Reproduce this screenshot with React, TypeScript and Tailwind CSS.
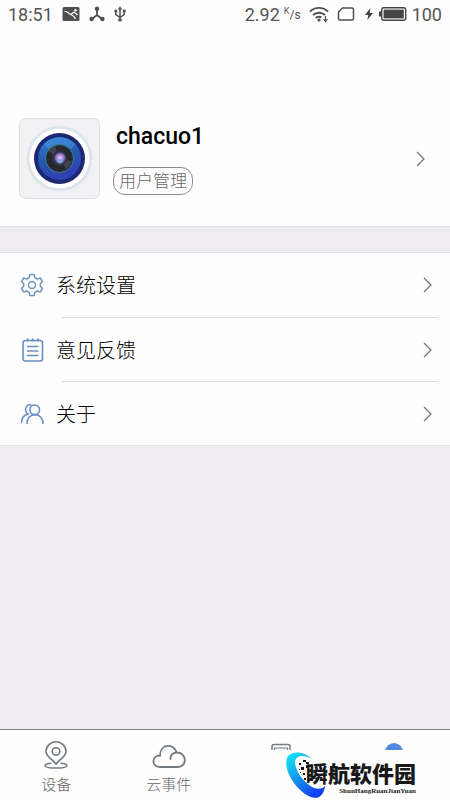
import type { ReactNode } from "react";

type MenuItem = {
    label: string;
    icon: ReactNode;
};

const menuItems: MenuItem[] = [
    { label: "系统设置", icon: <GearIcon /> },
    { label: "意见反馈", icon: <NotepadIcon /> },
    { label: "关于", icon: <PeopleIcon /> },
];

export default function App() {
    return (
        <div className="relative flex min-h-screen flex-col bg-[#eeecf0] font-['Roboto','Noto_Sans_CJK_SC',sans-serif] text-black">
            <header className="border-b border-[#e2e0e4] bg-[#fefefe]">
                <StatusBar />
                <Profile />
            </header>
            <main className="mt-[25px] flex-1">
                <ul className="border-y border-[#e2e0e4] bg-[#fefefe]">
                    {menuItems.map((item, index) => (
                        <MenuRow key={item.label} item={item} divided={index > 0} />
                    ))}
                </ul>
            </main>
            <TabBar />
            <Watermark />
        </div>
    );
}

function StatusBar() {
    return (
        <div className="flex h-7 items-center justify-between px-2 text-[18px] text-[#555]">
            <div className="flex items-center gap-[9px]">
                <span>18:51</span>
                <svg className="h-4 w-[18px]" viewBox="0 0 18 16" aria-hidden="true">
                    <rect x="0.5" y="1" width="17" height="14" rx="1.5" fill="#505050" />
                    <path d="M2.500 5.500C5 5 6.500 7.500 9 8.500 11 9.300 12.500 10 13.500 13" fill="none" stroke="#fefefe" strokeWidth="1.300" />
                    <path d="M9 8.500 12 6l3.500 3" fill="none" stroke="#fefefe" strokeWidth="1.200" />
                    <circle cx="13.500" cy="4.300" r="1.200" fill="#fefefe" />
                </svg>
                <svg className="h-4 w-4" viewBox="0 0 16 16" aria-hidden="true">
                    <path d="M8 3v6M8 9l-5 4M8 9l5 4" fill="none" stroke="#505050" strokeWidth="1.8" />
                    <circle cx="8" cy="2.800" r="2.200" fill="#505050" />
                    <circle cx="2.600" cy="13" r="2.200" fill="#505050" />
                    <circle cx="13.400" cy="13" r="2.200" fill="#505050" />
                </svg>
                <svg className="h-4 w-3" viewBox="0 0 12 16" fill="none" stroke="#505050" strokeWidth="1.500" aria-hidden="true">
                    <path d="M6 2v11M1.800 5.500v3L6 11.500M10.200 5v3.500L6 11.500" />
                    <path d="M3.800 3.500 6 .200l2.200 3.300z" fill="#505050" stroke="none" />
                    <circle cx="6" cy="14" r="1.800" fill="#505050" stroke="none" />
                    <circle cx="1.800" cy="5" r="1.500" fill="#505050" stroke="none" />
                    <path d="M8.800 3.600h2.800v2.800H8.800z" fill="#505050" stroke="none" />
                </svg>
            </div>
            <div className="flex items-center">
                <span>2.92</span>
                <span className="ml-1 flex text-[12px] leading-none">
                    <sup className="top-0 text-[9px] leading-none">K</sup>
                    <span className="pt-0.5">/s</span>
                </span>
                <svg className="ml-2 h-[18px] w-5" viewBox="0 0 20 18" fill="none" stroke="#505050" strokeWidth="1.9" aria-hidden="true">
                    <path d="M1 6.500a13 13 0 0 1 18 0M4 10a9 9 0 0 1 12 0M6.800 13a5 5 0 0 1 5.500-.6" />
                    <circle cx="10" cy="15" r="1.600" fill="#505050" stroke="none" />
                    <path d="M16.500 11v5M14.500 14l2 2.500 2-2.500" strokeWidth="1.200" />
                </svg>
                <svg className="ml-2 h-4 w-[18px]" viewBox="0 0 18 16" fill="none" stroke="#505050" strokeWidth="1.500" aria-hidden="true">
                    <path d="M5.500 2H15q1.500 0 1.500 1.500v9q0 1.500-1.500 1.500H3q-1.500 0-1.500-1.500V6z" />
                </svg>
                <svg className="ml-2.5 h-3.5 w-2" viewBox="0 0 8 14" fill="#404040" aria-hidden="true">
                    <path d="M5.500 1 0 8h3.300L2.300 13 8 6H4.700z" />
                </svg>
                <svg className="ml-1.5 h-4 w-7" viewBox="0 0 28 16" fill="#454545" aria-hidden="true">
                    <rect x="2.700" y="1.700" width="24" height="12.600" rx="2" fill="none" stroke="#454545" strokeWidth="1.400" />
                    <rect x="4.600" y="3.600" width="20.200" height="8.800" />
                    <path d="M0 5.500h2v5H0z" />
                </svg>
                <span className="ml-[5px]">100</span>
            </div>
        </div>
    );
}

function Profile() {
    return (
        <section className="flex items-center pt-[90px] pr-6 pb-[27px] pl-[19px]">
            <Avatar />
            <div className="ml-[13px] flex min-w-0 flex-1 flex-col items-start">
                <h1 className="ml-[3px] text-[23px] leading-7 font-medium">chacuo1</h1>
                <button
                    type="button"
                    className="mt-4 h-7 rounded-[12px] border border-[#8c8c8c] px-[5px] pt-px text-[17px] leading-6 font-light text-[#666]"
                >
                    用户管理
                </button>
            </div>
            <button type="button" aria-label="用户资料">
                <Chevron />
            </button>
        </section>
    );
}

function Avatar() {
    return (
        <svg className="size-[81px] shrink-0" viewBox="0 0 81 81" role="img" aria-label="头像">
            <defs>
                <linearGradient id="lens" x1="0" y1="0" x2="0.300" y2="1">
                    <stop offset="0" stopColor="#2f7fd0" />
                    <stop offset="0.550" stopColor="#2858b0" />
                    <stop offset="1" stopColor="#2f3fb5" />
                </linearGradient>
                <radialGradient id="halo">
                    <stop offset="0.850" stopColor="#cbdce6" />
                    <stop offset="1" stopColor="#e2e9ee" />
                </radialGradient>
                <radialGradient id="glint">
                    <stop offset="0" stopColor="#eadcff" />
                    <stop offset="0.600" stopColor="#a583d8" />
                    <stop offset="1" stopColor="#5f4f86" />
                </radialGradient>
            </defs>
            <rect x="0.500" y="0.500" width="80" height="80" rx="6" fill="#f2f2f5" stroke="#dfdee2" />
            <circle cx="40.500" cy="40.500" r="33" fill="url(#halo)" />
            <circle cx="40.500" cy="40.500" r="30" fill="#fff" />
            <circle cx="40.500" cy="40.500" r="25.500" fill="#1b2873" />
            <circle cx="40.500" cy="40.500" r="21.500" fill="url(#lens)" />
            <path d="M25 26a21 21 0 0 1 31 0L50 33a12 12 0 0 0-19 0z" fill="#4492dc" opacity="0.600" />
            <circle cx="40.500" cy="40.500" r="14" fill="#25282f" stroke="#3c829b" strokeWidth="1" />
            <path d="M40 40 29 33a13 13 0 0 1 7-5zM41 41l12 2a13 13 0 0 1-6 8z" fill="#5a6065" opacity="0.500" />
            <circle cx="40.500" cy="40.500" r="7.500" fill="#353049" />
            <circle cx="41" cy="40" r="5.500" fill="url(#glint)" />
            <circle cx="41" cy="43" r="2.500" fill="#78a9e8" />
        </svg>
    );
}

function MenuRow({ item, divided }: { item: MenuItem; divided: boolean }) {
    return (
        <li>
            {divided ? <div className="mr-3 ml-[62px] h-px bg-[#dddce0]" /> : null}
            <button type="button" className={`flex w-full items-center pr-[17px] pl-5 text-left ${divided ? "h-[63px]" : "h-16"}`}>
                {item.icon}
                <span className="ml-3 flex-1 pt-0.5 text-[20px] font-light text-black">{item.label}</span>
                <Chevron />
            </button>
        </li>
    );
}

function TabBar() {
    return (
        <nav className="border-t border-[#858388] bg-[#fefefe]">
            <ul className="grid h-[70px] grid-cols-4">
                <Tab label="设备">
                    <svg className="h-7 w-6" viewBox="0 0 24 28" fill="none" stroke="#73797d" strokeWidth="1.600" aria-hidden="true">
                        <path d="M12 23C9 19 2 15.500 2 10.500a10 9.700 0 0 1 20 0C22 15.500 15 19 12 23z" />
                        <circle cx="12" cy="10.500" r="3.800" />
                        <path d="M7.500 22.300C4 22.600 1 23.300 1 24.700s4 2.300 11 2.300 11-.9 11-2.300-3-2.100-6.500-2.400" />
                    </svg>
                </Tab>
                <Tab label="云事件">
                    <svg className="h-7 w-[34px]" viewBox="0 0 34 28" fill="none" stroke="#73797d" strokeWidth="1.800" strokeLinecap="round" aria-hidden="true">
                        <path d="M8 26C-1 26-.5 14.500 8 14.500 8 2 23 2.500 24.500 11.500 35 11 35.500 26 26 26zM24.500 11.500Q18.500 12 18.500 18" />
                    </svg>
                </Tab>
                <Tab name="录像">
                    <svg className="h-7 w-5" viewBox="0 0 20 28" fill="none" stroke="#73797d" strokeWidth="1.500" aria-hidden="true">
                        <rect x="1" y="3.500" width="18" height="23.500" rx="2" />
                        <path d="M3.500 9V7h13v2" strokeWidth="1.200" />
                    </svg>
                </Tab>
                <Tab name="我的">
                    <svg className="h-7 w-6" viewBox="0 0 24 28" fill="#5289e0" aria-hidden="true">
                        <circle cx="12" cy="11" r="9" />
                        <path d="M2 28a10 7 0 0 1 20 0z" />
                    </svg>
                </Tab>
            </ul>
        </nav>
    );
}

function Tab({ label, name, children }: { label?: string; name?: string; children: ReactNode }) {
    return (
        <li>
            <button
                type="button"
                aria-label={name}
                className="flex size-full flex-col items-center gap-1 pt-[11px] text-[15px] leading-6 font-light text-[#666]"
            >
                {children}
                {label ? <span>{label}</span> : null}
            </button>
        </li>
    );
}

/** Site logo laid over the right end of the tab bar. */
function Watermark() {
    return (
        <div className="absolute right-0 bottom-0 flex h-[50px] w-[199px] items-start bg-[#fefefe] pl-[33px]">
            <svg className="h-[50px] w-11 shrink-0" viewBox="284 750 44 50" aria-hidden="true">
                <defs>
                    <linearGradient id="swoosh" x1="0" y1="0" x2="0.600" y2="1">
                        <stop offset="0" stopColor="#14edf5" />
                        <stop offset="0.500" stopColor="#159eea" />
                        <stop offset="1" stopColor="#1040f0" />
                    </linearGradient>
                </defs>
                <path
                    d="M312 759C305 752 294 750 288 756 282 766 292 785 305 794 314 800 323 800 325 786 321 790 316 789 312 787 303 782 295 770 295 762 296 754 305 755 312 759z"
                    fill="url(#swoosh)"
                />
                <path
                    d="M303 760h3v2h-3zM299 763h2v2h-2zM301 767h3v3h-3zM306 765h3v3h-3zM303 773h2v2h-2zM300 772h1v1h-1zM304 778h2v2h-2zM306 762h3v2h-3zM299 769h1v1h-1z"
                    fill="#151515"
                />
            </svg>
            <div className="-ml-[22px] flex flex-col items-end pt-[13px]">
                <span className="text-[22px] leading-6 font-black whitespace-nowrap text-[#181818]">瞬航软件园</span>
                <span className="font-['Liberation_Serif',serif] text-[7px] leading-2 font-bold text-[#222]">ShunHangRuanJianYuan</span>
            </div>
        </div>
    );
}

function Chevron() {
    return (
        <svg className="h-4 w-3" viewBox="0 0 12 16" fill="none" stroke="#777" strokeWidth="1.300" aria-hidden="true">
            <path d="M3 1l7 7-7 7" />
        </svg>
    );
}

function GearIcon() {
    return (
        <svg className="size-6" viewBox="0 0 24 24" fill="none" stroke="#6f96c2" strokeWidth="1.500" strokeLinejoin="round" aria-hidden="true">
            <path d="M10 1.500h4l.8 3.200 2.400 1.300L20.300 5l2.200 3.700-2.200 2v2.600l2.200 2-2.200 3.700-3.100-1-2.400 1.300-.8 3.200h-4l-.8-3.200L6.800 18l-3.100 1-2.200-3.700 2.200-2v-2.600l-2.200-2L3.700 5l3.100 1 2.400-1.300z" />
            <circle cx="12" cy="12" r="3.500" />
        </svg>
    );
}

function NotepadIcon() {
    return (
        <svg className="size-6" viewBox="0 0 24 24" fill="none" stroke="#6590c4" strokeWidth="1.600" aria-hidden="true">
            <rect x="3" y="2.500" width="19.500" height="20.500" rx="2.500" />
            <path d="M7 8.500h11.500M7 13h11.500M7 17.500h11.500" />
            <path d="M7.500 .500v3M12.700.500v3M18 .500v3" strokeWidth="1.800" />
        </svg>
    );
}

function PeopleIcon() {
    return (
        <svg className="size-6" viewBox="0 0 24 24" fill="none" stroke="#6590c4" strokeWidth="1.600" strokeLinecap="round" aria-hidden="true">
            <circle cx="14.700" cy="7.800" r="4.800" />
            <path d="M7 21.500c0-5.500 3.500-8.900 8-8.900s8 3.400 8 8.900" />
            <path d="M11 3C8 2 5.500 4.500 5.500 7.500c0 2 1 3.500 2.500 4.500-4 1.200-6.500 4.500-6.500 8.500" />
        </svg>
    );
}
